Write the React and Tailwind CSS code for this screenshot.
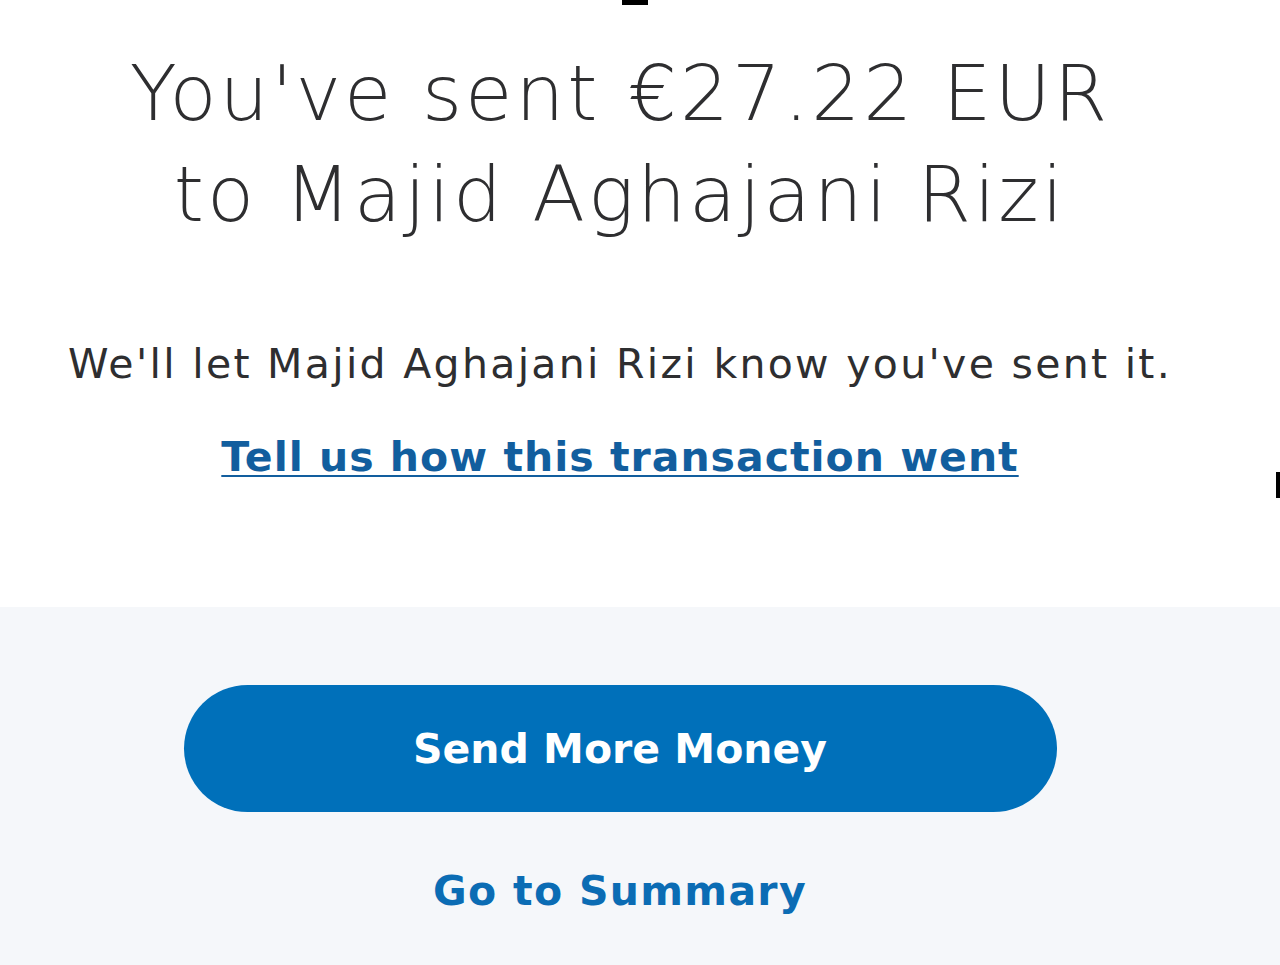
export default function App() {
  return (
    <div className="relative h-[965px] w-[1280px] overflow-hidden bg-white font-['DejaVu_Sans',sans-serif] text-[#2e2e30]">
      <div className="absolute left-[622px] top-0 h-[5px] w-[26px] bg-black" />
      <div className="absolute right-0 top-[472px] h-[26px] w-[4px] bg-black" />

      <section className="flex h-[607px] flex-col items-center pr-[40px] pt-[43px]">
        <h1 className="text-center text-[77px] font-extralight leading-[101px] tracking-[3px]">
          You've sent €27.22 EUR
          <br />
          to Majid Aghajani Rizi
        </h1>
        <p className="mt-[94px] text-[41px] leading-[50px] tracking-[2.3px]">
          We'll let Majid Aghajani Rizi know you've sent it.
        </p>
        <a href="#" className="mt-[43px] text-[41px] font-bold leading-[50px] tracking-[1px] text-[#125e9e] underline decoration-2 underline-offset-[4px]">
          Tell us how this transaction went
        </a>
      </section>

      <section className="flex h-[358px] flex-col items-center bg-[#f5f7fa] pr-[40px] pt-[78px]">
        <button className="flex h-[127px] w-[873px] items-center justify-center rounded-full bg-[#0070ba] pt-[3px] text-[41px] font-bold text-white">
          Send More Money
        </button>
        <a href="#" className="mt-[54px] text-[41px] font-bold leading-[50px] tracking-[1.3px] text-[#0b6cb4]">
          Go to Summary
        </a>
      </section>
    </div>
  );
}
